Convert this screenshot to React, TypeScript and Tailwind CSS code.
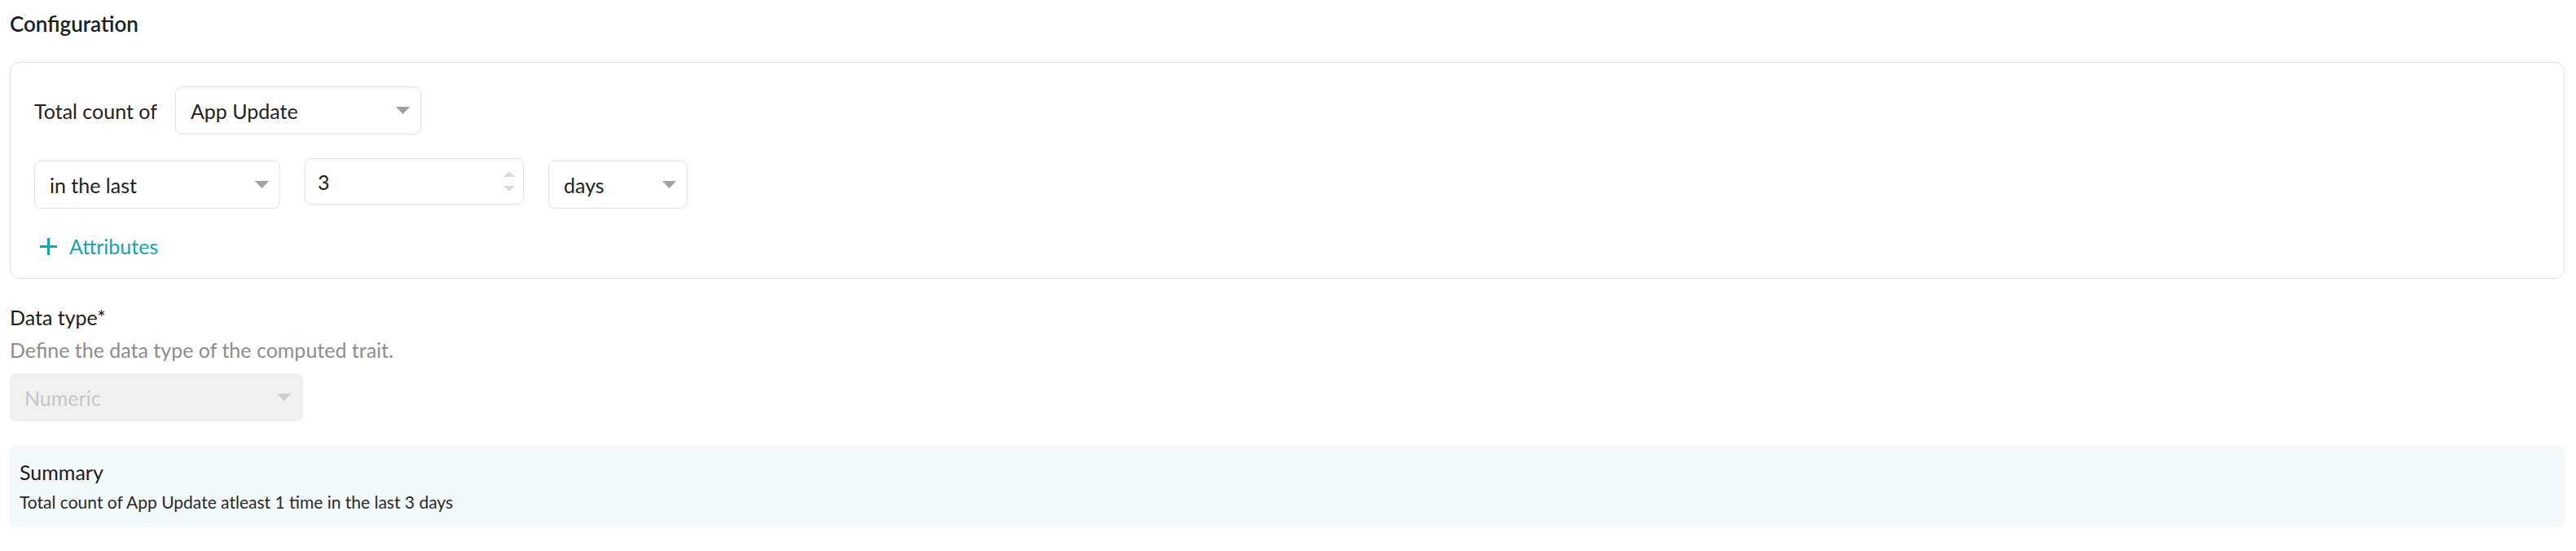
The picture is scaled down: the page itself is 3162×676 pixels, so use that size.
import React from 'react';

const Caret = ({ className = '' }: { className?: string }) => (
  <svg width="17" height="9" viewBox="0 0 17 9" className={className} aria-hidden="true">
    <path d="M0 0 H17 L8.5 9 Z" fill="currentColor" />
  </svg>
);

function Select({ value, width, disabled }: { value: string; width: string; disabled?: boolean }) {
  return (
    <div
      className={`${width} flex h-[59px] shrink-0 items-center justify-between rounded-[8px] pl-[18px] pr-[13px] text-[25px] leading-[30px] ${
        disabled ? 'bg-[#f0f0f0] text-[#c6c6c6] pr-[15px]' : 'border border-[#dde2f0] bg-white text-[#222222]'
      }`}
    >
      <span>{value}</span>
      <Caret className={disabled ? 'text-[#cfcfcf]' : 'text-[#a0a0a0]'} />
    </div>
  );
}

function NumberInput({ value }: { value: string }) {
  return (
    <div className="-mt-[3px] flex h-[57px] w-[269px] shrink-0 items-center justify-between rounded-[8px] border border-[#dde2f0] bg-white pl-[15px] pr-[10px] text-[25px] leading-[30px] text-[#222222]">
      <span>{value}</span>
      <div className="flex flex-col gap-[11px] text-[#d4daea]">
        <svg width="14" height="7" viewBox="0 0 14 7" aria-hidden="true">
          <path d="M7 0 L14 7 H0 Z" fill="currentColor" />
        </svg>
        <svg width="14" height="7" viewBox="0 0 14 7" aria-hidden="true">
          <path d="M0 0 H14 L7 7 Z" fill="currentColor" />
        </svg>
      </div>
    </div>
  );
}

export default function App() {
  return (
    <div className="min-h-[676px] w-full bg-white pl-[12px] pr-[14px] font-['Lato',sans-serif] text-[#222222]">
      <h2 className="pt-[14px] text-[26px] font-semibold leading-[31px] text-[#1c1c1c]">Configuration</h2>

      <div className="mt-[31px] rounded-[12px] border border-[#dde2f0] bg-white pb-[24px] pl-[29px] pr-[29px] pt-[29px]">
        <div className="flex items-center gap-[22px]">
          <span className="text-[25px] leading-[30px]">Total count of</span>
          <Select value="App Update" width="w-[302px]" />
        </div>

        <div className="mt-[32px] flex items-start gap-[30px]">
          <Select value="in the last" width="w-[302px]" />
          <NumberInput value="3" />
          <Select value="days" width="w-[171px]" />
        </div>

        <button className="mt-[31px] flex items-center gap-[15px] pl-[7px] text-[25px] leading-[30px] text-[#17a2b1]">
          <svg width="21" height="21" viewBox="0 0 21 21" aria-hidden="true">
            <path d="M10.5 0 V21 M0 10.5 H21" stroke="currentColor" strokeWidth="3.2" />
          </svg>
          <span>Attributes</span>
        </button>
      </div>

      <div className="mt-[32px] text-[25px] leading-[30px] text-[#1c1c1c]">Data type*</div>
      <div className="mt-[10px] text-[25px] leading-[30px] text-[#8d8d8d]">Define the data type of the computed trait.</div>
      <div className="mt-[14px]">
        <Select value="Numeric" width="w-[360px]" disabled />
      </div>

      <div className="mt-[30px] h-[100px] rounded-[8px] bg-[#f3f8fb] pl-[12px] pt-[18px]">
        <div className="text-[25px] leading-[28px] text-[#1c1c1c]">Summary</div>
        <div className="mt-[10px] text-[21px] leading-[25px] text-[#2a2a2a]">
          Total count of App Update atleast 1 time in the last 3 days
        </div>
      </div>
    </div>
  );
}
